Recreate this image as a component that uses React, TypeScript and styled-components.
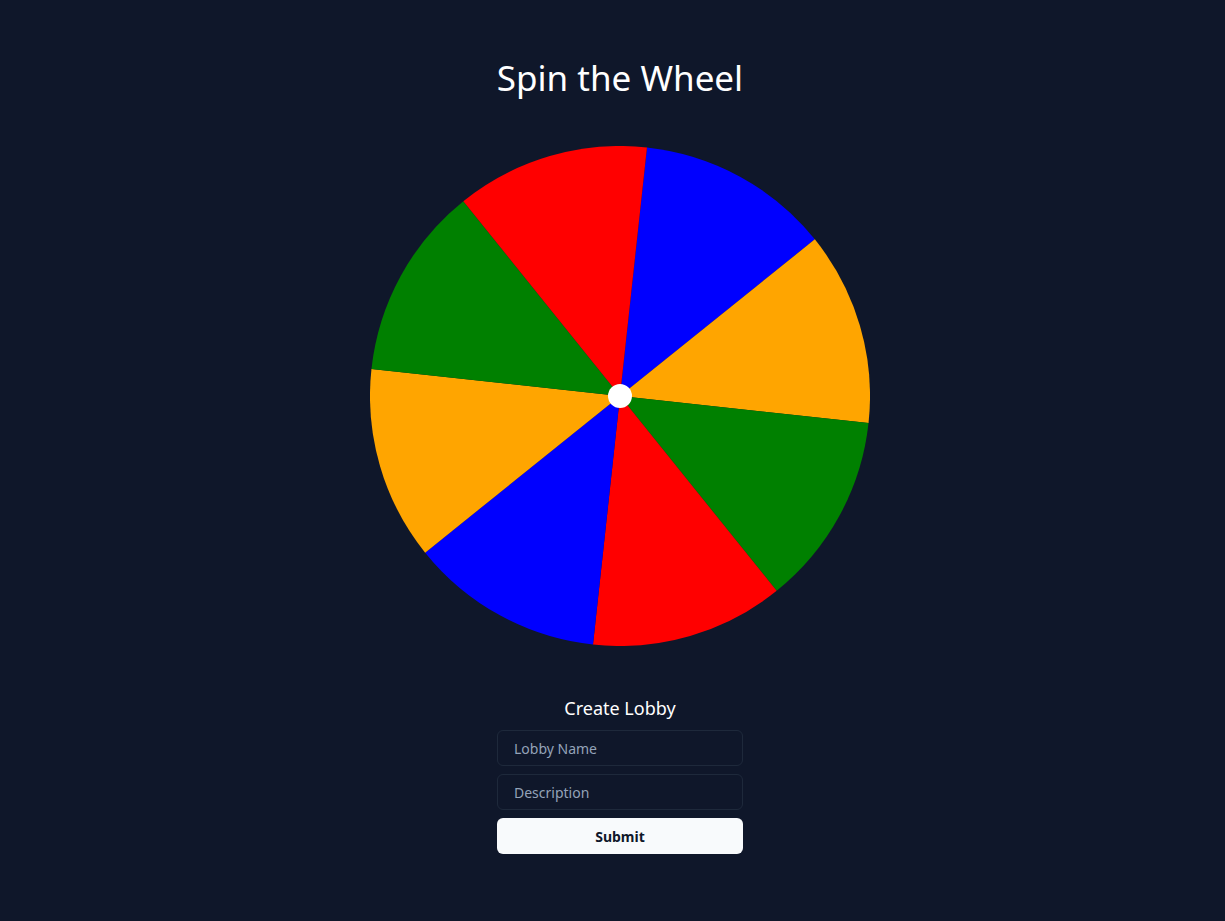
import React from "react";
import styled, { createGlobalStyle } from "styled-components";

const GlobalStyle = createGlobalStyle`
  html, body {
    margin: 0;
    padding: 0;
    background: #0f172a;
    font-family: "Noto Sans", "Open Sans", sans-serif;
  }
  * { box-sizing: border-box; }
`;

const Page = styled.main`
  min-height: 921px;
  background: #0f172a;
  display: flex;
  flex-direction: column;
  align-items: center;
  padding-top: 56px;
  padding-left: 15px;
`;

const Title = styled.h1`
  margin: 0;
  font-size: 35px;
  line-height: 44px;
  font-weight: 400;
  color: #ffffff;
`;

const WheelBox = styled.div`
  margin-top: 46px;
  width: 500px;
  height: 500px;
`;

const FormCard = styled.form`
  margin-top: 48px;
  width: 246px;
  display: flex;
  flex-direction: column;
  gap: 8px;
`;

const FormTitle = styled.h2`
  margin: 0;
  font-size: 18px;
  line-height: 28px;
  font-weight: 400;
  color: #ffffff;
  text-align: center;
`;

const Input = styled.input`
  height: 36px;
  width: 100%;
  border: 1px solid #1e293b;
  border-radius: 6px;
  background: transparent;
  padding: 0 16px;
  font-family: inherit;
  font-size: 14px;
  color: #e2e8f0;
  outline: none;
  &::placeholder { color: #94a3b8; }
`;

const SubmitButton = styled.button`
  height: 36px;
  width: 100%;
  border: none;
  border-radius: 6px;
  background: #f8fafc;
  color: #0f172a;
  font-family: inherit;
  font-size: 14px;
  font-weight: 700;
  cursor: pointer;
`;

const colors = ["blue", "orange", "green", "red", "blue", "orange", "green", "red"];

function Wheel() {
  const cx = 250, cy = 250, r = 250;
  const offset = 6.2;
  const pt = (deg: number) => {
    const a = (deg * Math.PI) / 180;
    return [cx + r * Math.sin(a), cy - r * Math.cos(a)];
  };
  return (
    <svg width="500" height="500" viewBox="0 0 500 500">
      {colors.map((c, i) => {
        const a0 = offset + i * 45;
        const a1 = a0 + 45;
        const [x0, y0] = pt(a0);
        const [x1, y1] = pt(a1);
        return (
          <path
            key={i}
            d={`M${cx} ${cy} L${x0} ${y0} A${r} ${r} 0 0 1 ${x1} ${y1} Z`}
            fill={c}
          />
        );
      })}
      <circle cx={cx} cy={cy} r={12} fill="#ffffff" />
    </svg>
  );
}

export default function App() {
  return (
    <>
      <GlobalStyle />
      <Page>
        <Title>Spin the Wheel</Title>
        <WheelBox>
          <Wheel />
        </WheelBox>
        <FormCard onSubmit={(e) => e.preventDefault()}>
          <FormTitle>Create Lobby</FormTitle>
          <Input placeholder="Lobby Name" />
          <Input placeholder="Description" />
          <SubmitButton type="submit">Submit</SubmitButton>
        </FormCard>
      </Page>
    </>
  );
}
